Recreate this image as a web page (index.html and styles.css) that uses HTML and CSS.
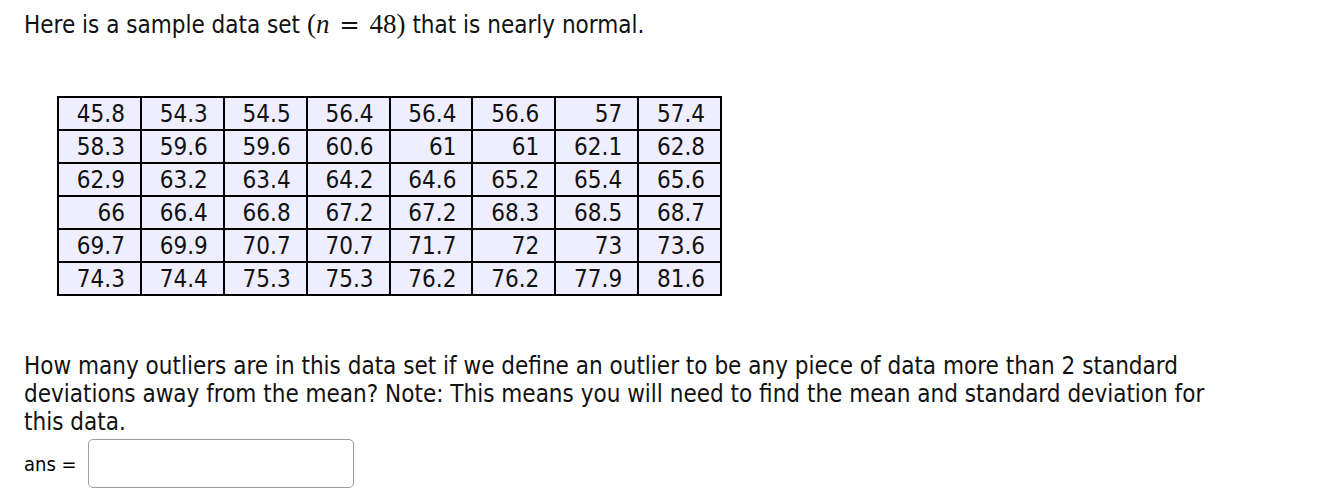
FILE: index.html
```html
<!DOCTYPE html>
<html>
<head>
<meta charset="utf-8">
<link rel="stylesheet" href="styles.css">
</head>
<body>
<div class="page">
  <p class="lead">Here is a sample data set <span class="math">(<i>n</i><span class="rel">=</span>48)</span> that is nearly normal.</p>
  <table class="data">
    <tr><td>45.8</td><td>54.3</td><td>54.5</td><td>56.4</td><td>56.4</td><td>56.6</td><td>57</td><td>57.4</td></tr>
    <tr><td>58.3</td><td>59.6</td><td>59.6</td><td>60.6</td><td>61</td><td>61</td><td>62.1</td><td>62.8</td></tr>
    <tr><td>62.9</td><td>63.2</td><td>63.4</td><td>64.2</td><td>64.6</td><td>65.2</td><td>65.4</td><td>65.6</td></tr>
    <tr><td>66</td><td>66.4</td><td>66.8</td><td>67.2</td><td>67.2</td><td>68.3</td><td>68.5</td><td>68.7</td></tr>
    <tr><td>69.7</td><td>69.9</td><td>70.7</td><td>70.7</td><td>71.7</td><td>72</td><td>73</td><td>73.6</td></tr>
    <tr><td>74.3</td><td>74.4</td><td>75.3</td><td>75.3</td><td>76.2</td><td>76.2</td><td>77.9</td><td>81.6</td></tr>
  </table>
  <p class="question">How many outliers are in this data set if we define an outlier to be any piece of data more than 2 standard deviations away from the mean? Note: This means you will need to find the mean and standard deviation for this data.</p>
  <div class="answer">
    <label class="ans-label" for="ans">ans =</label>
    <input class="ans-input" id="ans" type="text">
  </div>
</div>
</body>
</html>
```
FILE: styles.css
```css
html, body {
  margin: 0;
  padding: 0;
  background: #ffffff;
}
body {
  font-family: "DejaVu Sans Condensed", "DejaVu Sans", sans-serif;
  font-size: 24px;
  line-height: 28px;
  color: #111111;
}
.page {
  padding: 10px 24px 0 24px;
}
.lead {
  margin: 0;
}
.math {
  font-family: "Liberation Serif", serif;
  font-size: 27px;
}
.math i {
  font-style: italic;
}
.rel {
  font-family: "DejaVu Serif", serif;
  font-size: 24px;
  padding: 0 10px;
}
.data {
  margin: 57px 0 0 33px;
  width: 665px;
  table-layout: fixed;
  border-collapse: separate;
  border-spacing: 0;
  border: 1px solid #000;
}
.data td {
  border: 1px solid #000;
  background: #eeeeff;
  text-align: right;
  height: 33px;
  padding: 0 15px 0 4px;
  box-sizing: border-box;
  line-height: 28px;
}
.question {
  margin: 56px 0 0 0;
  max-width: 1195px;
}
.answer {
  display: flex;
  align-items: center;
  margin-top: 3px;
}
.ans-label {
  font-size: 20px;
  width: 64px;
  color: #000;
}
.ans-input {
  width: 266px;
  height: 49px;
  box-sizing: border-box;
  border: 1.5px solid #9c9c9c;
  border-radius: 5px;
  background: #fff;
  margin: 0;
  padding: 0 8px;
  font-size: 18px;
  font-family: inherit;
}
```
